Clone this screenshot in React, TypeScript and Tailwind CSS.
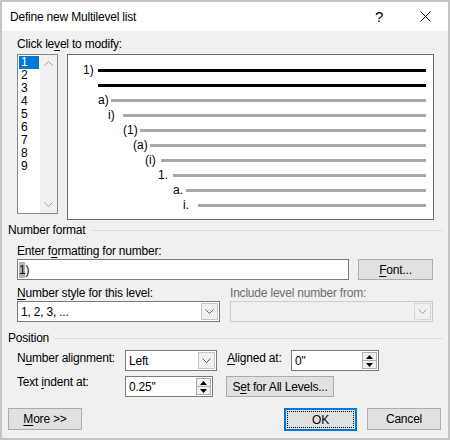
import React from "react";

const U = ({ children }: { children: React.ReactNode }) => (
  <span className="underline underline-offset-2 decoration-[1px]">{children}</span>
);

const Chevron = ({ color = "#606060" }: { color?: string }) => (
  <svg width="9" height="5" viewBox="0 0 9 5">
    <path d="M0.5 0.5 L4.5 4.5 L8.5 0.5" stroke={color} strokeWidth="1" fill="none" />
  </svg>
);

const Tri = ({ up }: { up?: boolean }) => (
  <svg width="7" height="4" viewBox="0 0 7 4">
    {up ? <path d="M0 4 L3.5 0 L7 4 Z" fill="#000" /> : <path d="M0 0 L3.5 4 L7 0 Z" fill="#000" />}
  </svg>
);

const Select = ({ w, value, disabled }: { w: string; value?: string; disabled?: boolean }) => (
  <div
    className={`${w} h-[21px] flex border ${
      disabled ? "border-[#cccccc] bg-[#f0f0f0]" : "border-[#7a7a7a] bg-white"
    }`}
  >
    <div className="flex-1 flex items-center pl-[3px] leading-[16px]">{value}</div>
    <div
      className={`w-[17px] m-[1px] ml-0 flex items-center justify-center border ${
        disabled ? "border-[#d9d9d9] bg-[#f0f0f0]" : "border-[#c6c6c6] bg-[#f0f0f0]"
      }`}
    >
      <Chevron color={disabled ? "#a0a0a0" : "#606060"} />
    </div>
  </div>
);

const Spin = ({ w, value }: { w: string; value: string }) => (
  <div className={`${w} h-[21px] flex border border-[#7a7a7a] bg-white`}>
    <div className="flex-1 flex items-center pl-[3px] leading-[16px]">{value}</div>
    <div className="w-[16px] flex flex-col p-[1px] pl-0 gap-0">
      <div className="flex-1 flex items-center justify-center border border-[#adadad] bg-[#f0f0f0]">
        <Tri up />
      </div>
      <div className="flex-1 flex items-center justify-center border border-t-0 border-[#adadad] bg-[#f0f0f0]">
        <Tri />
      </div>
    </div>
  </div>
);

const Button = ({ w, children, h = "h-[21px]" }: { w: string; children: React.ReactNode; h?: string }) => (
  <div className={`${w} ${h} border border-[#adadad] bg-[#e1e1e1] flex items-center justify-center leading-[16px]`}>
    {children}
  </div>
);

type Row = { spacer: number; box: number; label?: string; dark?: boolean };

const rows: Row[] = [
  { spacer: 15, box: 15, label: "1)", dark: true },
  { spacer: 30, box: 0, dark: true },
  { spacer: 30, box: 13, label: "a)" },
  { spacer: 40, box: 15, label: "i)" },
  { spacer: 55, box: 17, label: "(1)" },
  { spacer: 65, box: 17, label: "(a)" },
  { spacer: 77, box: 16, label: "(i)" },
  { spacer: 90, box: 15, label: "1." },
  { spacer: 105, box: 13, label: "a." },
  { spacer: 115, box: 15, label: "i." },
];

export default function App() {
  return (
    <div className="w-[450px] h-[440px] border-2 border-[#c4c4c4] flex flex-col bg-[#f0f0f0] text-black font-['Liberation_Sans',Arial,sans-serif] text-[12px] tracking-[-0.2px]">
      {/* Title bar */}
      <div className="h-[29px] bg-white flex items-center shrink-0">
        <div className="pl-[8px] flex-1 leading-[16px]">Define new Multilevel list</div>
        <div className="w-[46px] h-full flex items-center justify-center text-[15px] leading-none">?</div>
        <div className="w-[46px] h-full flex items-center justify-center">
          <svg width="11" height="11" viewBox="0 0 11 11">
            <path d="M0.5 0.5 L10.5 10.5 M10.5 0.5 L0.5 10.5" stroke="#000" strokeWidth="1" />
          </svg>
        </div>
      </div>

      {/* Body */}
      <div className="flex-1 flex flex-col">
        <div className="mt-[5px] pl-[15px] leading-[16px]">
          Click le<U>v</U>el to modify:
        </div>

        <div className="mt-[2px] pl-[15px] flex items-start gap-[9px]">
          {/* list box */}
          <div className="w-[41px] h-[160px] border border-[#828790] bg-white flex">
            <div className="flex-1 pt-[1px] px-[1px] flex flex-col">
              {["1", "2", "3", "4", "5", "6", "7", "8", "9"].map((n, i) => (
                <div
                  key={n}
                  className={`h-[13px] leading-[13px] pl-[2px] ${i === 0 ? "bg-[#0078d7] text-white" : ""}`}
                >
                  {n}
                </div>
              ))}
            </div>
            <div className="w-[17px] bg-[#f0f0f0] flex flex-col justify-between">
              <div className="h-[17px] flex items-center justify-center rotate-180">
                <Chevron color="#a6a6a6" />
              </div>
              <div className="h-[17px] flex items-center justify-center">
                <Chevron color="#a6a6a6" />
              </div>
            </div>
          </div>

          {/* preview */}
          <div className="w-[367px] h-[166px] border border-[#696969] bg-white pt-[8px] pr-[7px] flex flex-col tracking-normal">
            {rows.map((r, i) => (
              <div key={i} className="h-[15px] flex items-center">
                <div className="shrink-0" style={{ width: r.spacer }} />
                <div className="shrink-0 leading-[15px] whitespace-nowrap" style={{ width: r.box }}>
                  {r.label}
                </div>
                <div className={`flex-1 h-[3px] ${r.dark ? "bg-black" : "bg-[#a9a9a9]"}`} />
              </div>
            ))}
          </div>
        </div>

        {/* Number format */}
        <div className="mt-[2px] pl-[6px] pr-[5px] flex items-center leading-[16px]">
          <span>Number format</span>
          <div className="flex-1 h-px bg-[#dcdcdc] ml-[6px]" />
        </div>

        <div className="mt-[5px] pl-[15px] leading-[16px]">
          Enter f<U>o</U>rmatting for number:
        </div>
        <div className="pl-[15px] flex gap-[9px]">
          <div className="w-[332px] h-[21px] border border-[#7a7a7a] bg-white flex items-center pl-[1px] leading-[16px]">
            <span className="bg-[#b4b4b4]">1</span>
            <span>)</span>
          </div>
          <Button w="w-[75px]">
            <U>F</U>ont...
          </Button>
        </div>

        <div className="mt-[5px] pl-[15px] flex gap-[10px] leading-[16px]">
          <div className="w-[203px]">
            <U>N</U>umber style for this level:
          </div>
          <div className="w-[203px] text-[#6d6d6d]">Include level number from:</div>
        </div>
        <div className="pl-[15px] flex gap-[10px]">
          <Select w="w-[203px]" value="1, 2, 3, ..." />
          <Select w="w-[203px]" disabled />
        </div>

        {/* Position */}
        <div className="mt-[8px] pl-[6px] pr-[5px] flex items-center leading-[16px]">
          <span>Position</span>
          <div className="flex-1 h-px bg-[#dcdcdc] ml-[6px]" />
        </div>

        <div className="mt-[4px] pl-[15px] flex items-start">
          <div className="w-[108px] leading-[16px]">
            N<U>u</U>mber alignment:
          </div>
          <Select w="w-[92px]" value="Left" />
          <div className="w-[10px]" />
          <div className="w-[64px] leading-[16px]">
            <U>A</U>ligned at:
          </div>
          <Spin w="w-[88px]" value={'0"'} />
        </div>

        <div className="mt-[5px] pl-[15px] flex items-start">
          <div className="w-[108px] leading-[16px] -mt-[2px]">
            Text <U>i</U>ndent at:
          </div>
          <Spin w="w-[88px]" value={'0.25"'} />
          <div className="w-[13px]" />
          <Button w="w-[108px]">
            S<U>e</U>t for All Levels...
          </Button>
        </div>

        <div className="mt-[11px] pl-[6px] pr-[7px] flex justify-between">
          <Button w="w-[74px]" h="h-[22px]">
            <U>M</U>ore &gt;&gt;
          </Button>
          <div className="flex gap-[10px]">
            <div className="w-[73px] h-[23px] border-2 border-[#0078d7] bg-[#e1e1e1] p-[1px]">
              <div className="w-full h-full border border-dotted border-black flex items-center justify-center leading-[16px]">
                OK
              </div>
            </div>
            <Button w="w-[74px]" h="h-[22px]">
              Cancel
            </Button>
          </div>
        </div>
      </div>
    </div>
  );
}
